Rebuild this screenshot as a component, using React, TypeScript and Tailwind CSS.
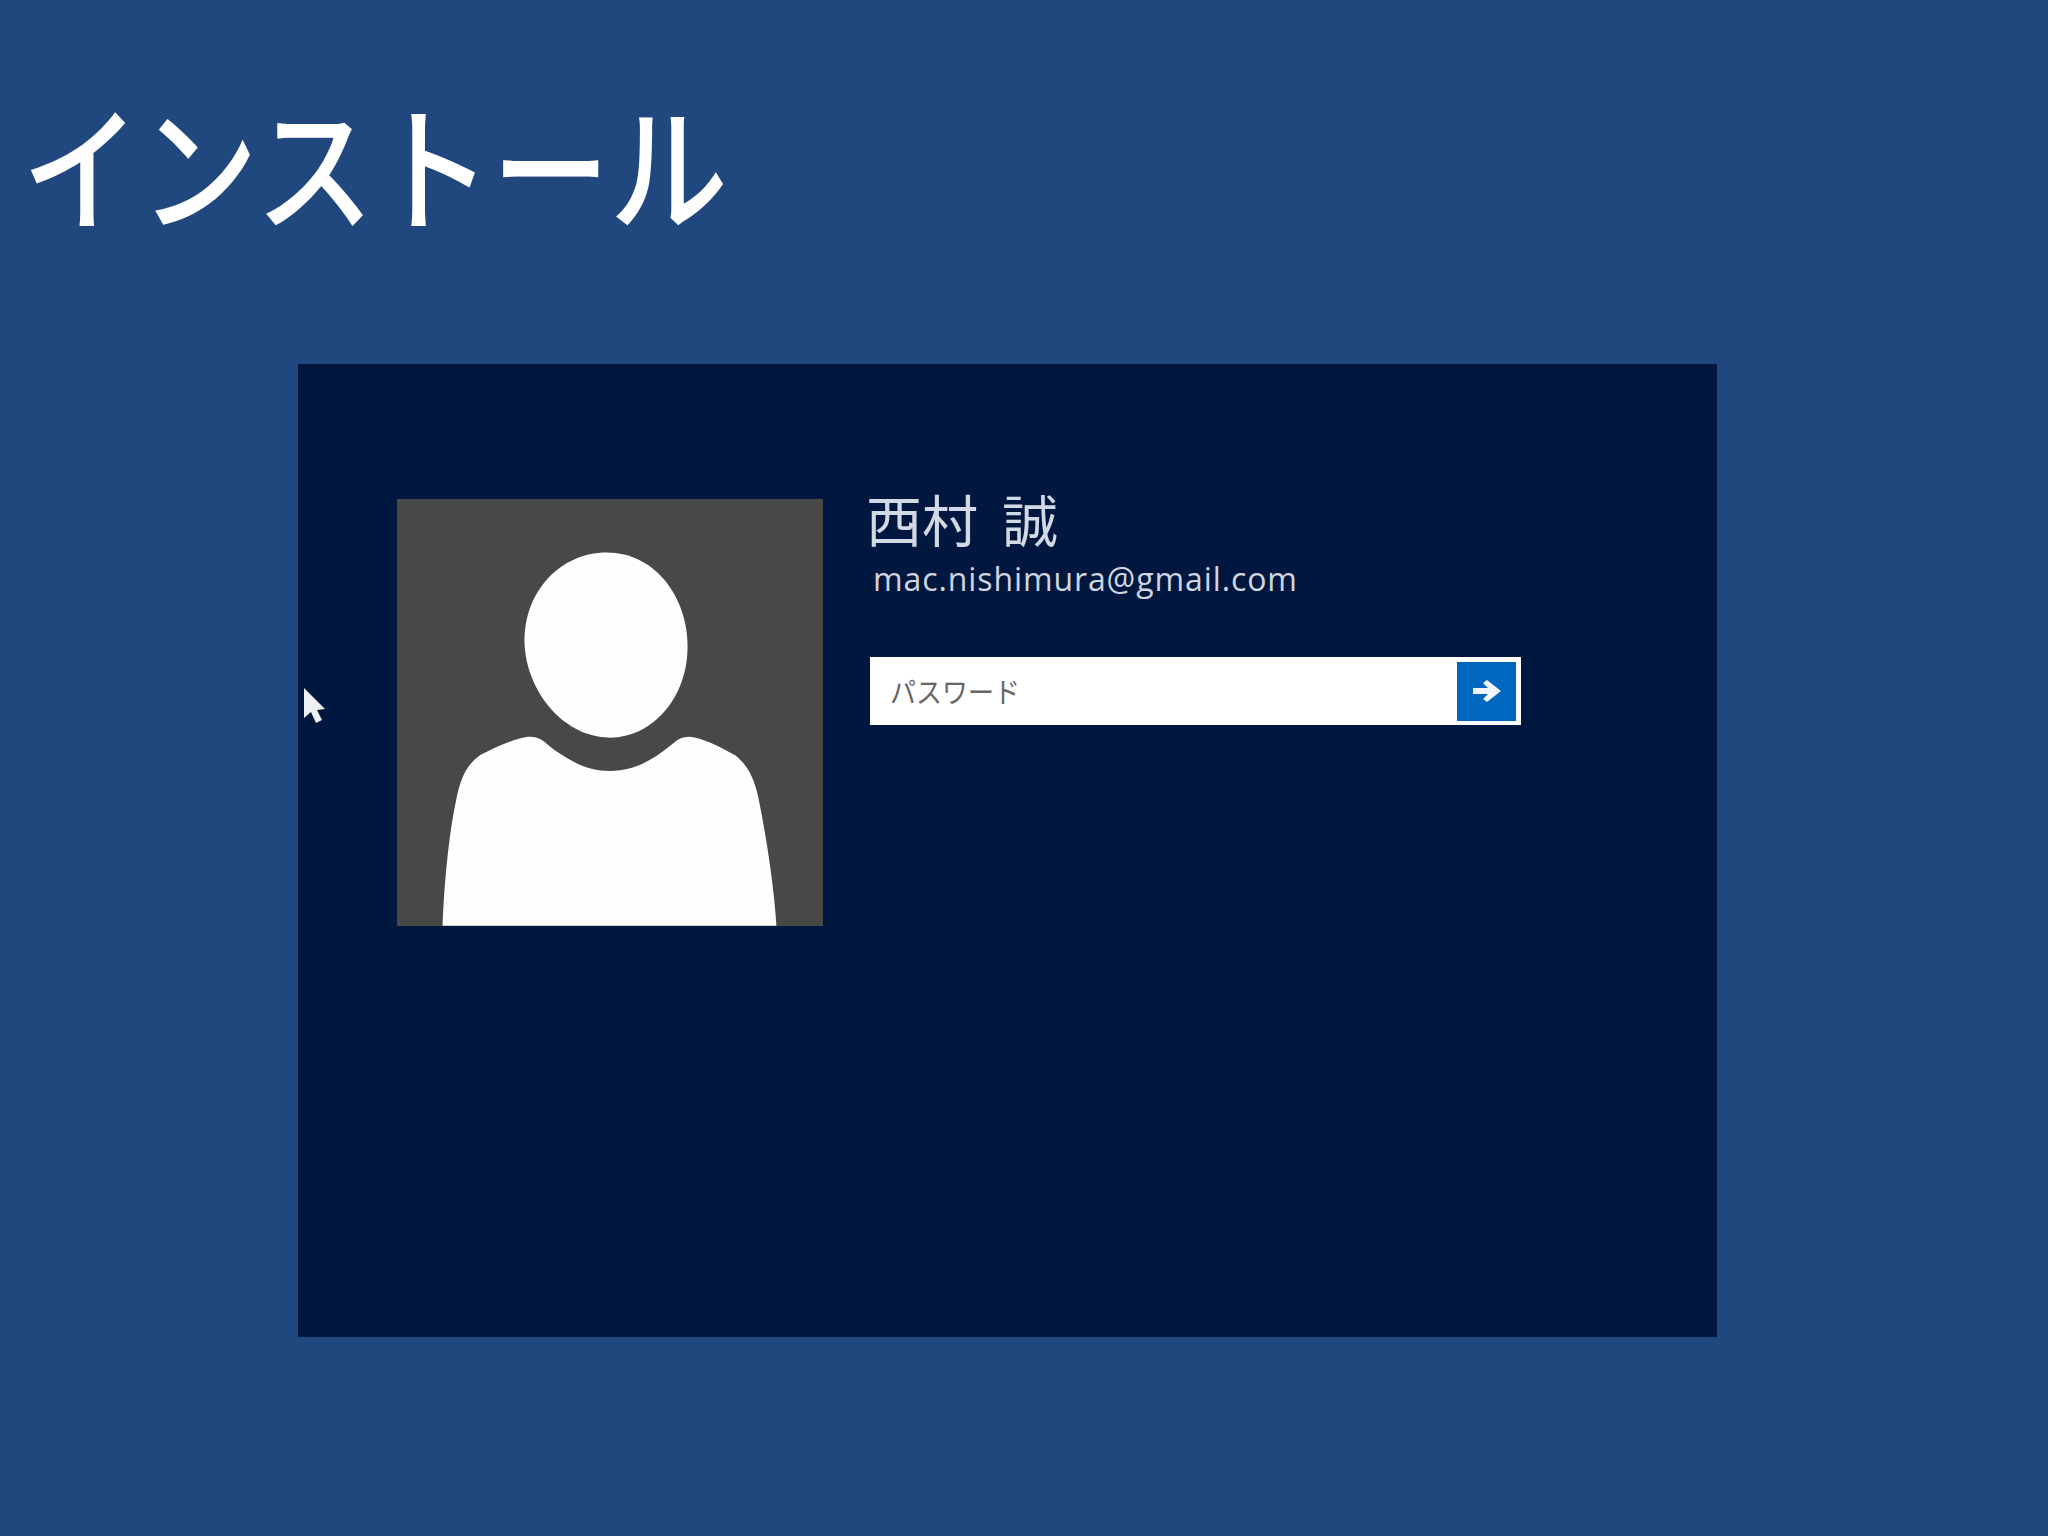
export default function App() {
  return (
    <div className="w-[2048px] h-[1536px] bg-[#20487e] overflow-hidden font-['Noto_Sans_CJK_JP','Noto_Sans',sans-serif]">
      <div className="h-[364px] pl-[22px] pt-[95px]">
        <h1 className="text-[118px] leading-[160px] text-white font-medium whitespace-nowrap origin-bottom scale-y-[1.16]">インストール</h1>
      </div>
      <div className="relative ml-[298px] w-[1419px] h-[973px] bg-[#00183f] pt-[135px] pl-[99px] flex items-start">
        <svg className="absolute left-[5px] top-[323px]" width="24" height="38" viewBox="0 0 24 38" aria-hidden="true">
          <path d="M1 1 L1 31 L8 25 L13 36 L19 33 L14 23 L22 22 Z" fill="#eef0f2" />
        </svg>
        <div className="w-[426px] h-[427px] bg-[#474946] shrink-0">
          <svg className="block w-full h-full" viewBox="50 57 1280 1281" aria-hidden="true">
            <path
              fill="#fefffd"
              d="M680 217 C825 217 923 350 923 500 C923 655 815 773 690 773 C545 773 433 625 433 480 C433 335 540 217 680 217 Z"
            />
            <path
              fill="#fefffd"
              d="M187 1338 C192 1210 206 1060 228 960 C240 900 255 858 300 825 C350 800 415 770 450 770 C480 770 492 785 525 812 C590 855 630 873 690 873 C760 873 810 845 865 802 C890 782 900 770 930 770 C965 772 1020 800 1065 825 C1100 852 1122 890 1135 950 C1158 1060 1183 1220 1190 1338 Z"
            />
          </svg>
        </div>
        <div className="ml-[45px] flex flex-col">
          <div className="h-[60px] -mt-[15px] -ml-[2px] text-[56px] leading-[68px] text-[#d3d9e4] font-normal whitespace-nowrap flex">
            <span>西村</span>
            <span className="ml-[24px]">誠</span>
          </div>
          <div className="ml-[5px] mt-[14px] text-[32px] leading-[42px] tracking-[0.9px] text-[#d0d5df] font-['Open_Sans',sans-serif] whitespace-nowrap">
            mac.nishimura@gmail.com
          </div>
          <div className="ml-[2px] mt-[57px] w-[651px] h-[68px] bg-white flex items-center justify-between pl-[20px] pr-[5px]">
            <span className="text-[26px] leading-[34px] text-[#666666] whitespace-nowrap scale-y-110">パスワード</span>
            <button className="w-[59px] h-[59px] bg-[#0067c0] flex items-center justify-center">
              <svg width="28" height="22" viewBox="0 0 28 22" aria-hidden="true">
                <path d="M0 8 H15 L10 3 L14 0 L28 11 L14 22 L10 19 L15 14 H0 Z" fill="#eef5fb" />
              </svg>
            </button>
          </div>
        </div>
      </div>
    </div>
  );
}
